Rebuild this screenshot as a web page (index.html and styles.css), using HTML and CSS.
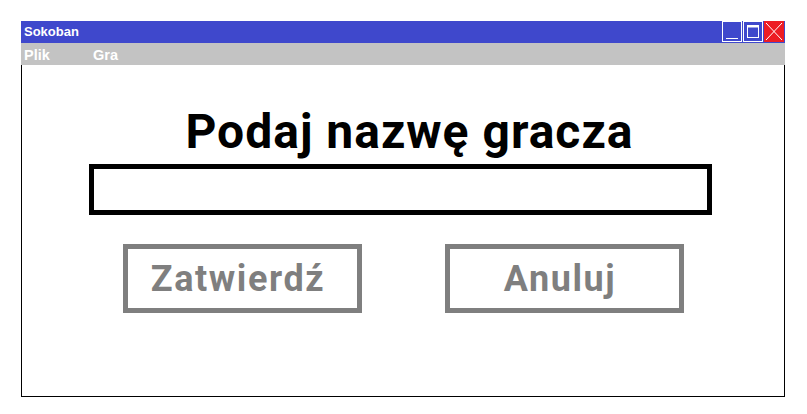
FILE: index.html
```html
<!DOCTYPE html>
<html lang="pl">
<head>
<meta charset="utf-8">
<title>Sokoban</title>
<link rel="stylesheet" href="styles.css">
</head>
<body>
<div class="window">
  <div class="titlebar">
    <span class="title">Sokoban</span>
    <div class="controls">
      <div class="ctl ctl-min">
        <svg width="20" height="21" viewBox="0 0 20 21"><rect x="0.5" y="0.5" width="19" height="20" fill="none" stroke="#fff"/><line x1="4" y1="17.5" x2="16" y2="17.5" stroke="#fff"/></svg>
      </div>
      <div class="ctl ctl-max">
        <svg width="20" height="21" viewBox="0 0 20 21"><rect x="0.5" y="0.5" width="19" height="20" fill="none" stroke="#fff"/><rect x="4.5" y="4.5" width="11" height="12" fill="none" stroke="#fff"/><line x1="4" y1="5.5" x2="16" y2="5.5" stroke="#fff" stroke-width="2"/></svg>
      </div>
      <div class="ctl ctl-close">
        <svg width="20" height="21" viewBox="0 0 20 21"><line x1="2" y1="2" x2="18" y2="19" stroke="#fff"/><line x1="18" y1="2" x2="2" y2="19" stroke="#fff"/></svg>
      </div>
    </div>
  </div>
  <div class="menubar">
    <span class="menu-item">Plik</span>
    <span class="menu-item">Gra</span>
  </div>
  <div class="content">
    <h1 class="heading">Podaj nazwę gracza</h1>
    <div class="name-input"></div>
    <div class="buttons">
      <div class="btn">Zatwierdź</div>
      <div class="btn">Anuluj</div>
    </div>
  </div>
</div>
</body>
</html>
```
FILE: styles.css
```css
html, body {
  margin: 0;
  padding: 0;
  background: #fff;
}
body {
  font-family: "Liberation Sans", Arial, sans-serif;
}
.window {
  margin: 21px 0 0 21px;
  width: 764px;
  height: 376px;
  display: flex;
  flex-direction: column;
}
.titlebar {
  height: 22px;
  background: #3f48cc;
  display: flex;
  align-items: flex-start;
  justify-content: space-between;
}
.title {
  color: #fff;
  font-weight: bold;
  font-size: 13px;
  line-height: 22px;
  padding-left: 3px;
}
.controls {
  display: flex;
  gap: 1px;
  padding-right: 1px;
}
.ctl {
  width: 20px;
  height: 21px;
}
.ctl svg { display: block; }
.ctl-close { background: #ed1c24; }
.menubar {
  height: 22px;
  background: #c3c3c3;
  display: flex;
  gap: 0;
}
.menu-item {
  color: #fff;
  font-weight: bold;
  font-size: 14.5px;
  line-height: 24px;
  padding-left: 3px;
  width: 66px;
}
.content {
  flex: 1;
  border: 1px solid #000;
  border-top: none;
  display: flex;
  flex-direction: column;
  align-items: center;
  padding-top: 42px;
}
.heading {
  margin: 0;
  font-family: Roboto, "Noto Sans", sans-serif;
  font-weight: bold;
  font-size: 48px;
  line-height: 50px;
  letter-spacing: 1px;
  color: #000;
  margin-left: 13px;
}
.name-input {
  margin-top: 7px;
  width: 623px;
  height: 51px;
  box-sizing: border-box;
  border: 5px solid #000;
  margin-left: -5px;
}
.buttons {
  margin-top: 29px;
  display: flex;
  gap: 83px;
}
.btn {
  width: 239px;
  height: 69px;
  box-sizing: border-box;
  border: 5px solid #7f7f7f;
  color: #7f7f7f;
  font-family: Roboto, "Noto Sans", sans-serif;
  font-weight: bold;
  font-size: 36px;
  letter-spacing: 1.6px;
  display: flex;
  align-items: center;
  justify-content: center;
  padding-right: 8px;
}
```
